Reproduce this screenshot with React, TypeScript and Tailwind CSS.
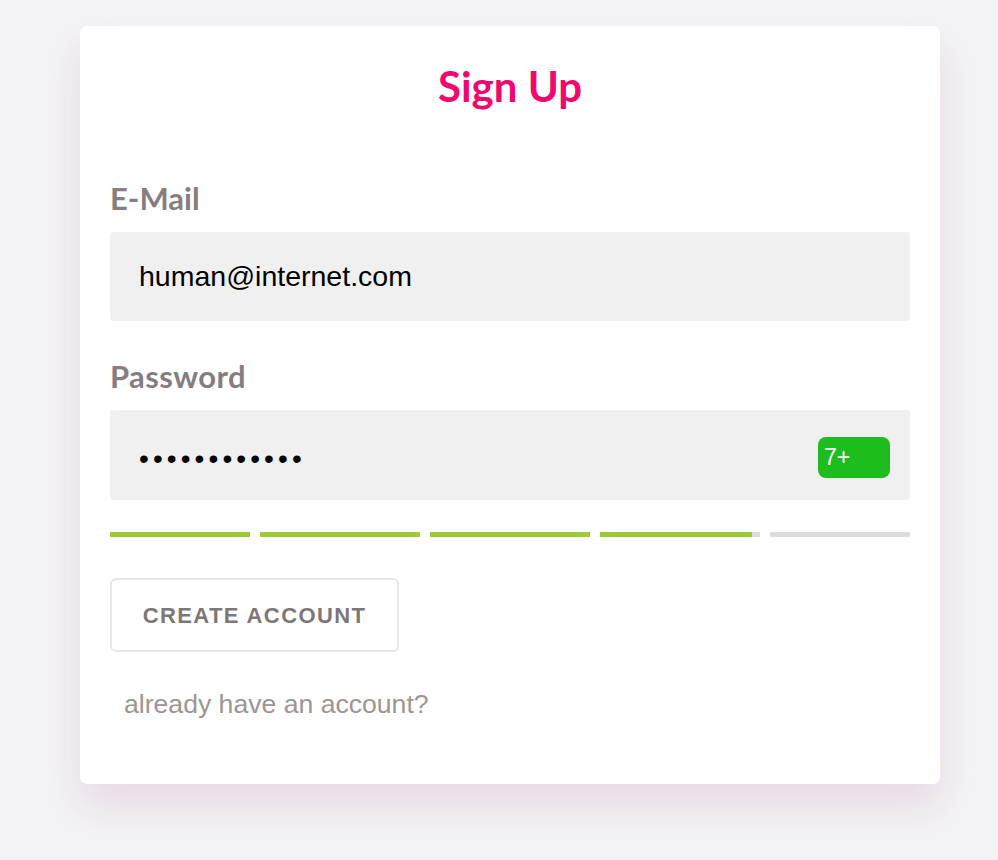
import React from 'react';

const segments = [
  { w: 'w-[140px]', fill: 'w-full' },
  { w: 'w-[160px]', fill: 'w-full' },
  { w: 'w-[160px]', fill: 'w-full' },
  { w: 'w-[160px]', fill: 'w-[152px]' },
  { w: 'w-[140px]', fill: 'w-0' },
];

export default function App() {
  return (
    <div className="min-h-[860px] w-full bg-[#f3f3f5] pt-[26px] pl-[80px]">
      <div className="w-[860px] rounded-[7px] bg-white px-[30px] pb-[65px] shadow-[0_22px_40px_rgba(205,160,195,0.3)]">
        {/* Title */}
        <h1 className="pt-[35px] text-center font-['Lato',sans-serif] text-[42px] leading-[50px] font-bold text-[#f0086f]">
          Sign Up
        </h1>

        {/* E-Mail */}
        <label className="mt-[69px] block font-['Lato',sans-serif] text-[31px] leading-[36px] font-bold text-[#847e80]">
          E-Mail
        </label>
        <div className="mt-[16px] flex h-[89px] items-center rounded-[3px] bg-[#f0f0f0] px-[29px]">
          <span className="font-['Liberation_Sans',sans-serif] text-[28.5px] text-black">human@internet.com</span>
        </div>

        {/* Password */}
        <label className="mt-[37px] block font-['Lato',sans-serif] text-[31px] leading-[36px] font-bold tracking-[0.4px] text-[#847e80]">
          Password
        </label>
        <div className="mt-[16px] flex h-[90px] items-center justify-between rounded-[3px] bg-[#f0f0f0] pl-[29px] pr-[20px]">
          <span className="mt-[8px] font-['Liberation_Sans',sans-serif] text-[28px] tracking-[4.1px] text-black">••••••••••••</span>
          <span className="mt-[4px] flex h-[41px] w-[72px] items-center rounded-[8px] bg-[#1ebd1e] pl-[6px] font-['Liberation_Sans',sans-serif] text-[23px] text-white">
            7+
          </span>
        </div>

        {/* Strength meter */}
        <div className="mt-[32px] flex gap-[10px]">
          {segments.map((s, i) => (
            <div key={i} className={`${s.w} h-[5px] bg-[#dcdcdc]`}>
              <div className={`${s.fill} h-full bg-[#9dcb36]`} />
            </div>
          ))}
        </div>

        <button className="mt-[41px] flex h-[74px] w-[289px] items-center justify-center rounded-[6px] border-2 border-[#e6e6e6] bg-white font-['Liberation_Sans',sans-serif] text-[22px] font-bold tracking-[1.4px] text-[#7d7778]">
          CREATE ACCOUNT
        </button>

        <p className="mt-[37px] ml-[14px] font-['Liberation_Sans',sans-serif] text-[26.6px] leading-[30px] text-[#9b9596]">
          already have an account?
        </p>
      </div>
    </div>
  );
}
